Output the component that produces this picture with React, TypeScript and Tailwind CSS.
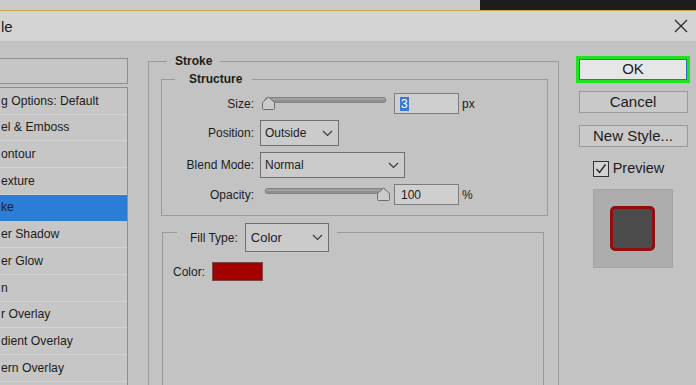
import React from "react";

const Chevron = () => (
  <svg width="11" height="7" viewBox="0 0 11 7" className="shrink-0">
    <path d="M1 1 L5.5 5.5 L10 1" fill="none" stroke="#3a3a3a" strokeWidth="1.2" />
  </svg>
);

const Slider = ({ thumb }: { thumb: number }) => (
  <svg width="130" height="21" viewBox="0 0 130 21" className="shrink-0">
    <rect x="5" y="4.5" width="121" height="5" rx="2.5" fill="#8f8f8f" stroke="#7c7c7c" strokeWidth="0.8" />
    <rect x="6" y="5.5" width="119" height="1.5" rx="0.75" fill="#a6a6a6" />
    <path
      d={`M${thumb + 0.5} ${9.5} L${thumb + 6.5} 4 L${thumb + 12.5} 9.5 L${thumb + 12.5} 15.5 Q${thumb + 12.5} 16.5 ${thumb + 11.5} 16.5 L${thumb + 1.5} 16.5 Q${thumb + 0.5} 16.5 ${thumb + 0.5} 15.5 Z`}
      fill="#cbcbcb"
      stroke="#6d6d6d"
      strokeWidth="1"
    />
  </svg>
);

const items = [
  "g Options: Default",
  "el & Emboss",
  "ontour",
  "exture",
  "ke",
  "er Shadow",
  "er Glow",
  "n",
  "r Overlay",
  "dient Overlay",
  "ern Overlay",
  "",
];

export default function App() {
  return (
    <div className="w-[696px] h-[385px] overflow-hidden flex flex-col bg-[#c3c3c3] text-[#1c1c1c] font-['Liberation_Sans',Arial,sans-serif]">
      {/* top strip */}
      <div className="flex h-[10px] shrink-0">
        <div className="flex-1 bg-[#cbcbcb]" />
        <div className="w-[216px] bg-[#1d1d1d]" />
      </div>
      <div className="h-px shrink-0 bg-[#c9a44a]" />
      {/* title bar */}
      <div className="h-[30px] shrink-0 bg-[#d4d4d4] flex items-center justify-between pr-[8px]">
        <span className="text-[15px] leading-none pl-[1px]">le</span>
        <svg width="14" height="14" viewBox="0 0 14 14">
          <path d="M1 1 L13 13 M13 1 L1 13" stroke="#2a2a2a" strokeWidth="1.3" />
        </svg>
      </div>
      {/* body */}
      <div className="flex flex-1 min-h-0 overflow-hidden">
        {/* left list */}
        <div className="w-[128px] shrink-0 pt-[17px] flex flex-col">
          <div className="h-[26px] shrink-0 border-y border-r border-[#8e8e8e] bg-[#c6c6c6]" />
          <div className="mt-[3px] shrink-0 border-t border-r border-[#8e8e8e] bg-[#c6c6c6] flex flex-col">
            {items.map((t, i) => (
              <div
                key={i}
                className={
                  "h-[26.7px] shrink-0 flex items-center pl-[1px] text-[12.2px] border-b whitespace-nowrap " +
                  (i === 4 ? "bg-[#2c7dd6] border-[#2c7dd6]" : "border-[#d3d3d3]")
                }
              >
                {t}
              </div>
            ))}
          </div>
        </div>

        {/* main */}
        <div className="ml-[20px] w-[411px] shrink-0 pt-[13px]">
          <fieldset className="border border-[#9a9a9a] h-[340px] flex flex-col">
            <legend className="ml-[18px] px-[8px] text-[12px] leading-[14px] font-bold">Stroke</legend>
            <fieldset className="mt-[4px] ml-[12px] mr-[10px] border border-[#9a9a9a] pb-[10px]">
              <legend className="ml-[13px] pl-[14px] pr-[10px] text-[12px] leading-[14px] font-bold">Structure</legend>
              <div className="grid grid-cols-[92px_1fr] gap-x-[6px] gap-y-[6px] pt-[7px] text-[12px] items-center">
                <div className="text-right">Size:</div>
                <div className="flex items-center">
                  <Slider thumb={2} />
                  <div className="ml-[4px] w-[65px] h-[21px] border border-[#7c7c7c] bg-[#cfcfcf] flex items-center pl-[5px]">
                    <span className="bg-[#3b78cf] text-white leading-[14px] px-[1px]">3</span>
                  </div>
                  <span className="ml-[3px]">px</span>
                </div>

                <div className="text-right">Position:</div>
                <div className="w-[79px] h-[26px] border border-[#6f6f6f] bg-[#cbcbcb] flex items-center justify-between pl-[4px] pr-[5px]">
                  <span>Outside</span>
                  <Chevron />
                </div>

                <div className="text-right">Blend Mode:</div>
                <div className="w-[145px] h-[26px] border border-[#6f6f6f] bg-[#cbcbcb] flex items-center justify-between pl-[4px] pr-[5px]">
                  <span>Normal</span>
                  <Chevron />
                </div>

                <div className="text-right">Opacity:</div>
                <div className="flex items-center">
                  <Slider thumb={117} />
                  <div className="ml-[4px] w-[65px] h-[21px] border border-[#7c7c7c] bg-[#cfcfcf] flex items-center pl-[6px]">
                    100
                  </div>
                  <span className="ml-[3px]">%</span>
                </div>
              </div>
            </fieldset>

            <fieldset className="mt-[-3px] ml-[13px] mr-[14px] border border-[#9a9a9a] flex-1">
              <legend className="ml-[14px] pl-[13px] pr-[8px] pt-[10px] text-[12px]">
                <div className="flex items-center">
                  <span>Fill Type:</span>
                  <div className="ml-[7px] w-[84px] h-[29px] border border-[#6f6f6f] bg-[#cbcbcb] flex items-center justify-between pl-[5px] pr-[5px] text-[13px]">
                    <span>Color</span>
                    <Chevron />
                  </div>
                </div>
              </legend>
              <div className="flex items-center pt-[10px] pl-[10px] text-[12px]">
                <span>Color:</span>
                <div className="ml-[7px] w-[51px] h-[19px] bg-[#a50000] border border-[#7a4848]" />
              </div>
            </fieldset>
          </fieldset>
        </div>

        {/* right column */}
        <div className="ml-[17px] w-[114px] shrink-0 pt-[15px] flex flex-col items-center">
          <div className="w-[114px] h-[27px] bg-[#22e022] p-[3px]">
            <div className="w-full h-full bg-[#e6e6e6] border border-[#2f6fae] flex items-center justify-center text-[15px]">
              OK
            </div>
          </div>
          <div className="mt-[8px] w-[109px] h-[22px] bg-[#c9c9c9] border border-[#9a9a9a] flex items-center justify-center text-[15px]">
            Cancel
          </div>
          <div className="mt-[12px] w-[109px] h-[22px] bg-[#c9c9c9] border border-[#9a9a9a] flex items-center justify-center text-[15px]">
            New Style...
          </div>
          <div className="mt-[11px] flex items-center gap-[4px] pr-[9px]">
            <div className="w-[16px] h-[16px] border border-[#333] bg-[#d2d2d2] flex items-center justify-center">
              <svg width="12" height="12" viewBox="0 0 12 12">
                <path d="M1.5 6 L4.5 9.5 L10.5 1.5" fill="none" stroke="#222" strokeWidth="1.3" />
              </svg>
            </div>
            <span className="text-[14.5px]">Preview</span>
          </div>
          <div className="mt-[9px] mr-[1px] w-[80px] h-[79px] bg-[#adadad] border border-[#a4a4a4] flex items-center justify-center">
            <div className="w-[45px] h-[45px] rounded-[5px] border-[3px] border-[#920d0d] bg-[#4b4b4b]" />
          </div>
        </div>
      </div>
    </div>
  );
}
